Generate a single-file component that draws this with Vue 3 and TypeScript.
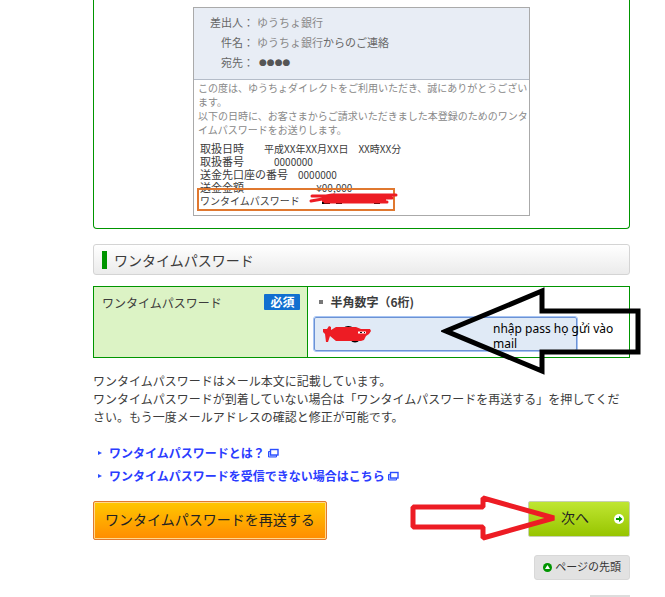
<script setup lang="ts">
import { ref } from 'vue'

interface MailRow {
  label: string
  value: string
}

const details: MailRow[] = [
  { label: '取扱日時', value: '　　平成XX年XX月XX日　XX時XX分' },
  { label: '取扱番号', value: '　　　0000000' },
  { label: '送金先口座の番号', value: '　0000000' },
  { label: '送金金額', value: '　　　　　　　 ¥00,000' },
]

const links: string[] = [
  'ワンタイムパスワードとは？',
  'ワンタイムパスワードを受信できない場合はこちら',
]

const password = ref('')
</script>

<template>
  <main class="page">
    <section class="guide">
      <div class="mail">
        <dl class="mail-head">
          <dt>差出人：</dt>
          <dd>ゆうちょ銀行</dd>
          <dt>件名：</dt>
          <dd>ゆうちょ銀行<span class="dark">からのご連絡</span></dd>
          <dt>宛先：</dt>
          <dd class="dots">●●●●</dd>
        </dl>
        <div class="mail-body">
          <p class="intro">
            この度は、ゆうちょダイレクトをご利用いただき、誠にありがとうござい<br />ます。<br />以下の日時に、お客さまからご請求いただきました本登録のためのワンタ<br />イムパスワードをお送りします。
          </p>
          <div class="details">
            <p v-for="row in details" :key="row.label">
              {{ row.label }}<span>{{ row.value }}</span>
            </p>
            <p class="pass">ワンタイムパスワード</p>
            <div class="mark">
              <svg width="92" height="14" viewBox="0 0 92 14" aria-hidden="true">
                <path d="M14 10H22M28 10H34M66 10H72" stroke="#000" stroke-width="2" />
                <path d="M4 3H18L24 2H88M3 8L20 5H84M17 9H79" fill="none" stroke="#ed1c24" stroke-width="3" stroke-linecap="round" />
                <path d="M14 4H78V9H14Z" fill="#ed1c24" />
              </svg>
            </div>
          </div>
        </div>
      </div>
    </section>

    <h2 class="title">ワンタイムパスワード</h2>

    <table class="form">
      <tbody>
        <tr>
          <th scope="row">
            <div class="th-row">
              <label for="otp">ワンタイムパスワード</label>
              <span class="required">必須</span>
            </div>
          </th>
          <td>
            <div class="field">
              <p class="hint">半角数字（6桁)</p>
              <input id="otp" v-model="password" type="text" inputmode="numeric" maxlength="6" />
              <svg class="scribble" width="50" height="20" viewBox="0 0 50 20" aria-hidden="true">
                <path d="M21 3Q26 -1 32 3ZM28 15Q33 20 38 15Z" fill="#000" />
                <path d="M1 4L5 4L7 1L9 2L9 5L14 2L34 2L39 4H48L49 6L47 9L44 11L42 15L39 16H14L8 11L6 17H4L3 9L1 7Z" fill="#ed1c24" />
                <path d="M36 7.500H44" stroke="#fff" stroke-width="2" />
                <path d="M38 7.500h2M42 7.500h1" stroke="#111" stroke-width="1" />
              </svg>
              <div class="note">
                <svg width="200" height="90" viewBox="0 0 200 90" aria-hidden="true">
                  <path d="M5 44L101 4V24H197V65H101V84Z" fill="none" stroke="#000" stroke-width="5" />
                </svg>
                <p>nhập pass họ gửi vào mail</p>
              </div>
            </div>
          </td>
        </tr>
      </tbody>
    </table>

    <p class="text">
      ワンタイムパスワードはメール本文に記載しています。<br />ワンタイムパスワードが到着していない場合は「ワンタイムパスワードを再送する」を押してください。もう一度メールアドレスの確認と修正が可能です。
    </p>

    <ul class="links">
      <li v-for="link in links" :key="link">
        <a href="#">{{ link }}<svg width="12" height="10" viewBox="0 0 12 10" aria-hidden="true">
          <path d="M3 3.500H1.500V9H9.500V7" fill="#b8ccff" stroke="#2b4eff" />
          <rect x="3.500" y="1.500" width="7.500" height="5.500" fill="#fff" stroke="#2b4eff" stroke-width="1.400" />
        </svg></a>
      </li>
    </ul>

    <div class="actions">
      <button type="button" class="resend">ワンタイムパスワードを再送する</button>
      <button type="button" class="next">
        <span>次へ</span>
        <svg width="10" height="10" viewBox="0 0 10 10" aria-hidden="true">
          <circle cx="5" cy="5" r="5" fill="#fff" />
          <path d="M2 4H5V2L8.500 5L5 8V6H2Z" fill="#009500" />
        </svg>
      </button>
      <svg class="red-arrow" width="150" height="48" viewBox="0 0 150 48" aria-hidden="true">
        <path d="M3 12H73V3L144 23L73 43V32H3Z" fill="none" stroke="#ed1c24" stroke-width="5" stroke-linejoin="bevel" />
      </svg>
    </div>

    <a href="#" class="top">
      <svg width="9" height="9" viewBox="0 0 9 9" aria-hidden="true">
        <circle cx="4.500" cy="4.500" r="4.500" fill="#009500" />
        <path d="M4.500 2L7 6H2Z" fill="#fff" />
      </svg>
      <span>ページの先頭</span>
    </a>
    <div class="tab"></div>
  </main>
</template>

<style>
body {
  margin: 0;
  background: #fff;
}
</style>

<style scoped>
* {
  box-sizing: border-box;
}

p,
dl,
dd,
h2,
ul {
  margin: 0;
  padding: 0;
}

.page {
  display: flex;
  flex-direction: column;
  height: 100vh;
  overflow: hidden;
  padding: 0 35px 0 93px;
  font-family: 'Noto Sans CJK JP', sans-serif;
  font-size: 12px;
  line-height: 18px;
  color: #3c3c3c;
}

.page > * {
  flex-shrink: 0;
}

.guide {
  padding: 7px 99px 12px;
  border: 1px solid #009500;
  border-top: 0;
  border-radius: 0 0 4px 4px;
}

.mail {
  border: 1px solid #aaa;
  white-space: nowrap;
}

.mail-head {
  display: grid;
  grid-template-columns: 60px 1fr;
  column-gap: 3px;
  padding: 4px 0 7px;
  font-size: 11px;
  line-height: 20px;
  color: #888;
  background: #e8edf5;
  border-bottom: 1px solid #b4bcc8;
}

.mail-head dt {
  text-align: right;
  color: #666;
}

.dark {
  color: #666;
}

.mail-head .dots {
  font-family: 'DejaVu Sans', sans-serif;
  font-size: 9px;
  color: #555;
  padding-left: 2px;
}

.mail-body {
  padding: 1px 4px 8px;
}

.intro {
  font-size: 10px;
  line-height: 14px;
  color: #888;
}

.details {
  position: relative;
  margin-left: 2px;
  padding-top: 5px;
  font-size: 11px;
  line-height: 13px;
}

.details span,
.details .pass {
  font-size: 10px;
  white-space: pre;
}

.mark {
  position: absolute;
  left: -3px;
  bottom: -4px;
  width: 198px;
  height: 23px;
  padding-left: 109px;
  border: 2px solid #e0782f;
}

.mark svg {
  display: block;
  margin-top: 3px;
}

.title {
  display: flex;
  align-items: center;
  gap: 7px;
  height: 31px;
  margin-top: 15px;
  padding-left: 8px;
  font-size: 14px;
  font-weight: 400;
  border: 1px solid #d4d4d4;
  border-radius: 3px;
  background: linear-gradient(#fff, #ebebeb);
}

.title::before {
  content: '';
  width: 5px;
  height: 18px;
  background: #009500;
}

.form {
  width: 100%;
  margin-top: 11px;
  border-collapse: collapse;
  table-layout: fixed;
}

.form th,
.form td {
  padding: 6px;
  border: 1px solid #009500;
  vertical-align: top;
  text-align: left;
}

.form th {
  width: 40%;
  padding: 7px 7px 0 8px;
  font-weight: 400;
  background: #dcf3c5;
}

.th-row {
  display: flex;
  justify-content: space-between;
}

.required {
  height: 16px;
  padding: 0 6px;
  line-height: 15px;
  font-weight: 700;
  color: #fff;
  background: #116fd0;
  border-radius: 1px;
}

.field {
  position: relative;
}

.hint {
  display: flex;
  align-items: center;
  gap: 7px;
  padding-left: 5px;
  font-weight: 700;
}

.hint::before {
  content: '';
  width: 4px;
  height: 4px;
  background: #777;
}

.field input {
  display: block;
  width: 85%;
  height: 34px;
  margin-top: 6px;
  padding: 0 8px;
  font: inherit;
  border: 1px solid #6c92d4;
  border-radius: 2px;
  outline: 1px solid #a6c4f4;
  outline-offset: 0;
  background: #e0eaf6;
}

.scribble {
  position: absolute;
  left: 8px;
  top: 32px;
}

.note {
  position: absolute;
  right: -18px;
  top: -6px;
  color: #000;
}

.note svg {
  display: block;
}

.note p {
  position: absolute;
  left: 52px;
  top: 34px;
  width: 130px;
  font-family: 'Noto Sans', sans-serif;
  font-size: 12px;
  line-height: 15px;
}

.text {
  margin-top: 14px;
}

.links {
  margin-top: 15px;
  list-style: none;
  line-height: 23px;
}

.links li {
  display: flex;
  align-items: center;
  gap: 7px;
  padding-left: 5px;
}

.links li::before {
  content: '';
  border: 2px solid transparent;
  border-left: 4px solid #2b4eff;
  border-right: 0;
}

.links a {
  display: flex;
  align-items: center;
  gap: 2px;
  font-weight: 700;
  color: #2b3cff;
  text-decoration: none;
}

.actions {
  position: relative;
  display: flex;
  justify-content: space-between;
  align-items: flex-start;
  margin-top: 14px;
}

button {
  font: inherit;
  font-size: 14px;
  color: #222;
}

.resend {
  height: 39px;
  padding: 0 11px 4px;
  border: 1px solid #e07a30;
  border-radius: 2px;
  background: linear-gradient(#ffc800, #ff8c00);
  box-shadow: inset 0 0 0 1px #ffd98c;
}

.next {
  display: flex;
  align-items: center;
  justify-content: space-between;
  width: 102px;
  height: 36px;
  padding: 0 5px 0 32px;
  border: 1px solid #c8d0b4;
  border-radius: 2px;
  background: linear-gradient(#bfe632, #97c500);
}

.next span {
  padding-bottom: 4px;
}

.red-arrow {
  position: absolute;
  right: 70px;
  top: -6px;
}

.top {
  display: flex;
  align-items: center;
  align-self: flex-end;
  gap: 3px;
  height: 25px;
  margin-top: 15px;
  padding: 0 8px;
  font-size: 11px;
  color: #333;
  text-decoration: none;
  border: 1px solid #d8d8d8;
  border-radius: 3px;
  background: #e2e2e2;
}

.top span {
  padding-bottom: 4px;
}

.tab {
  align-self: flex-end;
  width: 40px;
  height: 25px;
  margin-top: 15px;
  background: #ddd;
}
</style>
